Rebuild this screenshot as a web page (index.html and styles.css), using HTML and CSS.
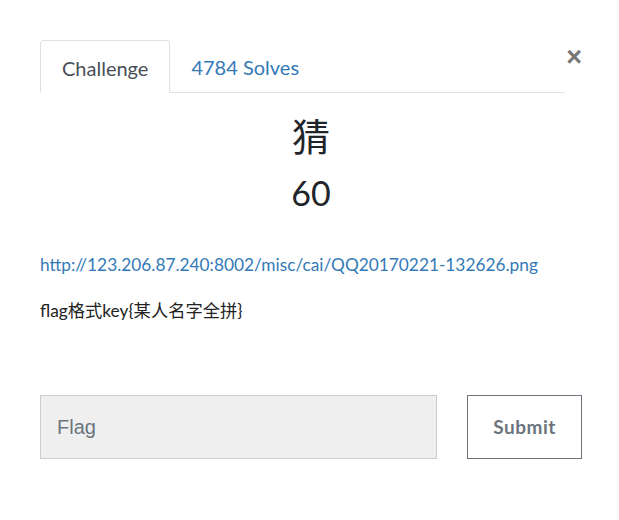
FILE: index.html
```html
<!DOCTYPE html>
<html>
<head>
<meta charset="utf-8">
<link rel="stylesheet" href="styles.css">
</head>
<body>
<div class="modal">
  <div class="head">
    <ul class="tabs">
      <li class="tab active">Challenge</li>
      <li class="tab link">4784 Solves</li>
    </ul>
    <span class="close">&times;</span>
  </div>
  <h2 class="title">猜</h2>
  <h3 class="value">60</h3>
  <div class="desc">
    <p><a href="#">http://123.206.87.240:8002/misc/cai/QQ20170221-132626.png</a></p>
    <p class="hint">flag格式key{某人名字全拼}</p>
  </div>
  <div class="form">
    <div class="input">Flag</div>
    <div class="btn">Submit</div>
  </div>
</div>
</body>
</html>
```
FILE: styles.css
```css
html, body { margin: 0; padding: 0; background: #fff; }
body { font-family: Lato, "Noto Sans CJK SC", sans-serif; color: #212529; }
.modal { padding: 40px 37px 0 40px; }
.head { display: flex; align-items: flex-start; }
.tabs { list-style: none; margin: 0; padding: 0; display: flex; flex: 1; border-bottom: 1px solid #dee2e6; height: 52px; }
.tab { font-size: 20px; padding: 0 21px; line-height: 55px; height: 51px; box-sizing: border-box; }
.tab.active { color: #495057; border: 1px solid #dee2e6; border-bottom-color: #fff; border-radius: 4px 4px 0 0; height: 53px; background: #fff; }
.tab.link { color: #337ab7; padding-left: 21px; }
.close { width: 17px; text-align: right; font-size: 27px; font-weight: bold; color: #777; line-height: 34px; margin-top: 0; font-family: "Liberation Sans", sans-serif; }
.title { text-align: center; font-weight: 400; font-size: 38px; margin: 20px 0 0; line-height: 46px; color: #212529; }
.value { text-align: center; font-weight: 400; font-size: 34px; margin: 14px 0 0; line-height: 40px; color: #212529; }
.desc { margin-top: 40px; font-size: 17.3px; }
.desc p { margin: 0 0 22px; line-height: 24px; }
.desc a { color: #337ab7; text-decoration: none; }
.hint { color: #222; }
.form { display: flex; margin-top: 72px; gap: 30px; }
.input { width: 397px; height: 64px; box-sizing: border-box; background: #efefef; border: 1px solid #ccc; font-family: "Liberation Sans", sans-serif; font-size: 20px; color: #6c757d; padding-left: 16px; line-height: 62px; }
.btn { width: 115px; height: 64px; box-sizing: border-box; border: 1px solid #6c757d; color: #6c757d; font-weight: 700; font-size: 19px; text-align: center; line-height: 62px; letter-spacing: 0.5px; }
```
